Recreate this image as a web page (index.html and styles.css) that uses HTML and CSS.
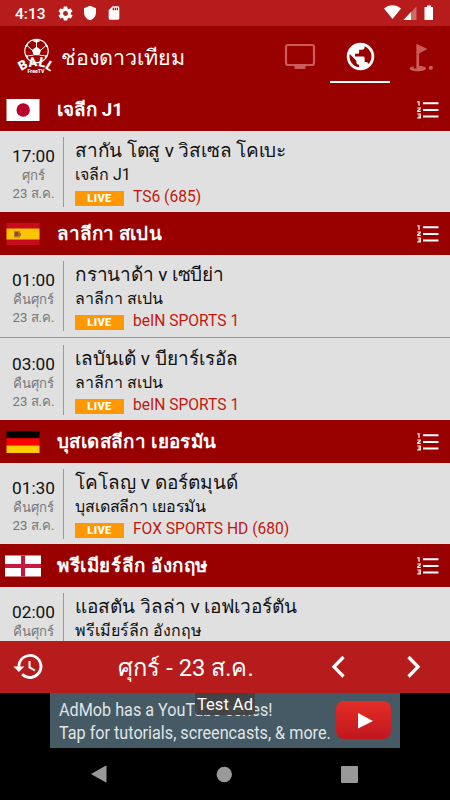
FILE: index.html
```html
<!DOCTYPE html>
<html lang="th">
<head>
    <meta charset="UTF-8">
    <title>Ball FreeTV</title>
    <link rel="stylesheet" href="styles.css">
</head>
<body>
    <svg class="defs" width="0" height="0">
        <symbol id="list" viewBox="0 0 22 18">
            <path d="M6 1.200h15.500v2H6zM6 7.900h15.500v2H6zM6 14.500h15.500v2H6z"/>
            <path d="M.3.800h1.700v3.900M.3 7h2.900v1L.8 9.500v.8h3M.3 13h3v3.900h-3M1 15h2" fill="none" stroke="#fff" stroke-width="1.200"/>
        </symbol>
    </svg>
    <div class="status-bar">
        <span class="clock">4:13</span>
        <svg class="status-icon" width="17" height="17" viewBox="0 0 24 24"><path d="M19.4 13a7.500 7.500 0 0 0 0-2l2.100-1.600a.5.5 0 0 0 .1-.7l-2-3.400a.5.5 0 0 0-.6-.2l-2.500 1a7.300 7.300 0 0 0-1.700-1L14.500 2.400A.5.5 0 0 0 14 2h-4a.5.5 0 0 0-.5.4L9.100 5.100a7.700 7.700 0 0 0-1.700 1l-2.500-1a.5.5 0 0 0-.6.2l-2 3.400a.5.5 0 0 0 .1.7L4.600 11a7.900 7.900 0 0 0 0 2l-2.100 1.600a.5.5 0 0 0-.1.7l2 3.400c.1.2.4.3.6.2l2.500-1a7.300 7.300 0 0 0 1.700 1l.4 2.700c0 .2.2.4.5.4h4c.2 0 .5-.2.5-.4l.4-2.700a7.700 7.700 0 0 0 1.700-1l2.500 1c.2.1.5 0 .6-.2l2-3.400a.5.5 0 0 0-.1-.7zM12 15.500a3.500 3.500 0 1 1 0-7 3.500 3.500 0 0 1 0 7z"/></svg>
        <svg class="status-icon" width="16" height="16" viewBox="0 0 24 24"><path d="M12 1 3 5v6c0 5.500 3.800 10.700 9 12 5.200-1.300 9-6.500 9-12V5z"/></svg>
        <svg class="status-icon" width="16" height="16" viewBox="0 0 24 24"><path d="M18 2h-8L4 8v12a2 2 0 0 0 2 2h12a2 2 0 0 0 2-2V4a2 2 0 0 0-2-2zm-6 6h-2V4h2zm3 0h-2V4h2zm3 0h-2V4h2z"/></svg>
        <svg class="signals" width="50" height="16" viewBox="0 0 50 16">
            <path d="M0 3.500C5-1 12-1 17 3.500L8.500 14z"/>
            <path d="M19.500 15h13V1.500z" opacity=".35"/>
            <path d="M19.500 15H27V7z"/>
            <path d="M43 .5h4V2h2v13h-8.500V2H43z"/>
        </svg>
    </div>
    <div class="header">
        <svg class="logo" width="36" height="36" viewBox="0 0 36 36">
            <circle cx="19.500" cy="13" r="11.700" fill="none" stroke="#fff" stroke-width="1.200"/>
            <path d="M19.500 8.700l4.600 3.300-1.700 5.300h-5.800l-1.700-5.300zM15 2.700l4.500 2 4.500-2-4.500-1zM8 10.200l2.500-2 1-4L8.500 7.700zM31 10.200l-2.500-2-1-4 3 3.500zM11 20.700l.3-3-3-1.500zM28 20.700l-.3-3 3-1.500z"/>
            <path d="M19.500 4v5M10.500 8l4.500 4M28.500 8L24 12M11.300 17.700L16.500 17.200M27.700 17.700L22.500 17.200" stroke="#fff"/>
            <g class="logo-text">
                <text transform="translate(4.300 33) rotate(-29)">B</text>
                <text transform="translate(11.800 29) rotate(-6)">A</text>
                <text transform="translate(21 28) rotate(12)">L</text>
                <text transform="translate(27.500 30) rotate(32)">L</text>
            </g>
            <text class="logo-sub" x="10.500" y="34.500" textLength="17" lengthAdjust="spacingAndGlyphs">FreeTV</text>
        </svg>
        <div class="title">ช่องดาวเทียม</div>
        <div class="tabs">
            <div class="tab">
                <svg width="32" height="28" viewBox="0 0 32 28"><rect x="2" y="2" width="28" height="20" rx="2" fill="none" stroke="#cc5c5c" stroke-width="2.200"/><path d="M10.500 22h11v4h-11z"/></svg>
            </div>
            <div class="tab active">
                <svg width="33" height="33" viewBox="0 0 24 24"><path d="M12 2a10 10 0 1 0 0 20 10 10 0 0 0 0-20zm-1 17.900A8 8 0 0 1 4.200 10.200L9 15v1a2 2 0 0 0 2 2zm6.900-2.500A2 2 0 0 0 16 16h-1v-3a1 1 0 0 0-1-1H8v-2h2a1 1 0 0 0 1-1V7h2a2 2 0 0 0 2-2v-.4a8 8 0 0 1 2.900 12.800z"/></svg>
            </div>
            <div class="tab">
                <svg width="33" height="33" viewBox="0 0 24 24"><circle cx="19.500" cy="19.500" r="1.500"/><path d="M17 5.900 9 2v18H7v-1.700c-1.800.3-3 1-3 1.700 0 1.100 2.700 2 6 2s6-.9 6-2c0-1-2.200-1.800-5-2V9z"/></svg>
            </div>
        </div>
    </div>
    <div class="schedule">
        <div class="league">
            <svg class="flag" width="36" height="22" viewBox="0 0 36 22"><path d="M1.500 0h33v22h-33z" fill="#fff"/><circle cx="18.200" cy="11" r="6.700" fill="#bc002d"/></svg>
            <h2 class="l1">เจลีก J1</h2>
            <svg class="list-icon"><use href="#list"/></svg>
        </div>
        <div class="match">
            <div class="when"><b>17:00</b><span>ศุกร์</span><span>23 ส.ค.</span></div>
            <div class="info">
                <div class="teams t1">สากัน โตสู v วิสเซล โคเบะ</div>
                <div class="competition">เจลีก J1</div>
                <div class="channel"><i>LIVE</i><span>TS6 (685)</span></div>
            </div>
        </div>
        <div class="league">
            <svg class="flag" width="36" height="22" viewBox="0 0 36 22"><path d="M1.500 0h33v22h-33z" fill="#c60b1e"/><path d="M1.500 5.500h33v11h-33z" fill="#ffc400"/><path d="M9 8h6v6.500H9z" fill="#ad7c3a"/><path d="M10 9h3v4h-3z" fill="#ad3c22"/><path d="M13 10h3v3h-3z" fill="#8f754d"/></svg>
            <h2 class="l2">ลาลีกา สเปน</h2>
            <svg class="list-icon"><use href="#list"/></svg>
        </div>
        <div class="match">
            <div class="when"><b>01:00</b><span>คืนศุกร์</span><span>23 ส.ค.</span></div>
            <div class="info">
                <div class="teams t2">กรานาด้า v เซบีย่า</div>
                <div class="competition">ลาลีกา สเปน</div>
                <div class="channel"><i>LIVE</i><span>beIN SPORTS 1</span></div>
            </div>
        </div>
        <div class="divider"></div>
        <div class="match">
            <div class="when"><b>03:00</b><span>คืนศุกร์</span><span>23 ส.ค.</span></div>
            <div class="info">
                <div class="teams t3">เลบันเต้ v บียาร์เรอัล</div>
                <div class="competition">ลาลีกา สเปน</div>
                <div class="channel"><i>LIVE</i><span>beIN SPORTS 1</span></div>
            </div>
        </div>
        <div class="league">
            <svg class="flag" width="36" height="22" viewBox="0 0 36 22"><path d="M1.500 0h33v7.400h-33z" fill="#000"/><path d="M1.500 7.300h33v7.400h-33z" fill="#f00"/><path d="M1.500 14.600h33V22h-33z" fill="#fc0"/></svg>
            <h2 class="l3">บุสเดสลีกา เยอรมัน</h2>
            <svg class="list-icon"><use href="#list"/></svg>
        </div>
        <div class="match">
            <div class="when"><b>01:30</b><span>คืนศุกร์</span><span>23 ส.ค.</span></div>
            <div class="info">
                <div class="teams t4">โคโลญ v ดอร์ตมุนด์</div>
                <div class="competition c3">บุสเดสลีกา เยอรมัน</div>
                <div class="channel"><i>LIVE</i><span>FOX SPORTS HD (680)</span></div>
            </div>
        </div>
        <div class="league">
            <svg class="flag" width="36" height="22" viewBox="0 0 36 22"><path d="M0 .5h36v21H0z" fill="#fff"/><path d="M16 .5h4v21h-4zM0 9h36v4H0z" fill="#c8193c"/></svg>
            <h2 class="l4">พรีเมียร์ลีก อังกฤษ</h2>
            <svg class="list-icon"><use href="#list"/></svg>
        </div>
        <div class="match">
            <div class="when"><b>02:00</b><span>คืนศุกร์</span></div>
            <div class="info">
                <div class="teams t5">แอสตัน วิลล่า v เอฟเวอร์ตัน</div>
                <div class="competition">พรีเมียร์ลีก อังกฤษ</div>
            </div>
        </div>
    </div>
    <div class="date-bar">
        <svg class="history" width="33" height="33" viewBox="0 0 24 24"><path d="M13 3a9 9 0 0 0-9 9H1l3.900 3.900.1.100L9 12H6a7 7 0 1 1 2.100 4.900l-1.400 1.400A9 9 0 1 0 13 3zm-1 5v5l4.300 2.500.7-1.200-3.500-2.100V8z"/></svg>
        <div class="date">ศุกร์ - 23 ส.ค.</div>
        <svg class="prev" width="15" height="24" viewBox="0 0 15 24"><path d="M12.500 2 3 11.800l9.500 9.700" fill="none" stroke="#fff" stroke-width="3.300"/></svg>
        <svg class="next" width="15" height="24" viewBox="0 0 15 24"><path d="M2.500 2 12 11.800l-9.500 9.700" fill="none" stroke="#fff" stroke-width="3.300"/></svg>
    </div>
    <div class="ad">
        <div class="ad-text">AdMob has a YouTube series!<br>Tap for tutorials, screencasts, &amp; more.</div>
        <div class="play"><svg width="16" height="17" viewBox="0 0 16 17"><path d="M1 1v15.500L16 9z"/></svg></div>
        <div class="test-ad">Test Ad</div>
    </div>
    <div class="nav-bar">
        <svg width="17" height="18" viewBox="0 0 17 18"><path d="M0 9 14.500.8q1-.5 1 .5v15.500q0 1-1 .5z"/></svg>
        <svg width="17" height="17" viewBox="0 0 17 17"><circle cx="8.300" cy="8.500" r="7.700"/></svg>
        <svg width="17" height="17" viewBox="0 0 17 17"><rect width="17" height="17" rx="1"/></svg>
    </div>
</body>
</html>
```
FILE: styles.css
```css
* {
    box-sizing: border-box;
}
body {
    margin: 0;
    width: 450px;
    height: 800px;
    overflow: hidden;
    display: flex;
    flex-direction: column;
    background: #000;
    color: #fff;
    font-family: Roboto, "Noto Sans", sans-serif;
}
svg {
    display: block;
    flex: none;
    fill: #fff;
}
.defs {
    display: none;
}
.status-bar {
    height: 26px;
    flex: none;
    display: flex;
    align-items: center;
    background: #b71c1c;
    padding: 0 15px;
}
.clock {
    font-size: 15.5px;
    font-weight: 500;
    width: 42px;
    margin-top: 1px;
}
.status-icon {
    margin-right: 8px;
}
.signals {
    margin-left: auto;
    margin-right: 1px;
    margin-top: -1px;
}
.header {
    height: 62px;
    flex: none;
    display: flex;
    background: #990000;
    padding-left: 17px;
}
.logo {
    margin-top: 12px;
    overflow: visible;
}
.logo-text {
    font: 900 13px Roboto, sans-serif;
}
.logo-sub {
    font: 900 5.5px Roboto, sans-serif;
}
.title {
    margin-left: 8px;
    font-size: 21.5px;
    line-height: 63px;
    white-space: nowrap;
}
.tabs {
    margin-left: auto;
    display: flex;
}
.tab {
    width: 60px;
    height: 57px;
    display: flex;
    align-items: center;
    justify-content: center;
    padding-top: 5px;
}
.tab svg {
    fill: #cc5c5c;
}
.active {
    border-bottom: 2px solid #fff;
}
.tab.active svg {
    fill: #fff;
}
.schedule {
    height: 552.5px;
    flex: none;
    overflow: hidden;
    background: #e0e0e0;
}
.league {
    height: 43.1px;
    display: flex;
    align-items: center;
    background: #990000;
    padding: 0 11px 0 5px;
}
h2 {
    margin: 2px 0 0 16px;
    font-size: 18.8px;
    line-height: 41px;
    font-weight: 700;
    white-space: nowrap;
}
.l2 {
    letter-spacing: 0.1px;
}
.l3 {
    letter-spacing: 0.4px;
}
.l4 {
    letter-spacing: 0.6px;
}
.list-icon {
    width: 22px;
    height: 18px;
    margin-left: auto;
}
.match {
    height: 81px;
    display: flex;
    padding: 6px 0 5px;
    color: #111;
}
.when {
    width: 64px;
    flex: none;
    display: flex;
    flex-direction: column;
    align-items: center;
    padding: 8px 0 0 4px;
    border-right: 1px solid #999;
    font-size: 13.2px;
    font-weight: 400;
    color: #777;
    white-space: nowrap;
}
.when b {
    font-size: 17.3px;
    line-height: 22px;
    font-weight: 400;
    color: #111;
}
.when span {
    line-height: 18px;
}
.info {
    margin-left: 11px;
    white-space: nowrap;
}
.teams {
    font-size: 19px;
    line-height: 27px;
}
.t1,
.t2 {
    letter-spacing: -0.18px;
}
.competition {
    font-size: 16px;
    line-height: 22px;
}
.c3 {
    letter-spacing: -0.12px;
}
.channel {
    display: flex;
    align-items: center;
    height: 21px;
    font-size: 15.6px;
    color: #c0180e;
}
.channel i {
    width: 49px;
    height: 15px;
    margin: 3px 9px 0 0;
    background: #ff9800;
    color: #fff;
    font: 900 11px/16px Roboto, sans-serif;
    letter-spacing: 0.4px;
    text-align: center;
}
.divider {
    height: 2px;
    margin-top: 1px;
    border-top: 1px solid #999;
}
.date-bar {
    height: 52.5px;
    flex: none;
    display: flex;
    align-items: center;
    background: #b71c1c;
    padding-left: 12px;
}
.date {
    width: 285px;
    text-align: center;
    padding: 2px 3px 0 0;
    font-size: 23.7px;
}
.prev {
    margin-left: 1px;
}
.next {
    margin-left: 60px;
}
.ad {
    position: relative;
    width: 350px;
    height: 55px;
    flex: none;
    margin: 0 auto;
    background: #455a64;
}
.ad-text {
    padding: 6px 0 0 9px;
    font-size: 18.5px;
    line-height: 23px;
    white-space: nowrap;
    color: #e0e5e7;
    transform: scaleX(0.875);
    transform-origin: 9px 0;
}
.play {
    position: absolute;
    left: 286px;
    top: 8px;
    width: 55px;
    height: 38px;
    border-radius: 8px;
    background: linear-gradient(#e52d27, #bf171d);
    display: flex;
    align-items: center;
    justify-content: center;
}
.play svg {
    margin-left: 2px;
}
.test-ad {
    position: absolute;
    left: 145px;
    top: 0;
    width: 60px;
    height: 22px;
    border-radius: 0 0 3px 3px;
    background: rgba(66, 66, 66, 0.95);
    text-align: center;
    font-size: 16.5px;
    line-height: 23px;
}
.nav-bar {
    display: flex;
    justify-content: space-between;
    align-items: center;
    height: 52px;
    padding: 0 92px 0 91px;
}
.nav-bar svg {
    fill: #999;
}
```
